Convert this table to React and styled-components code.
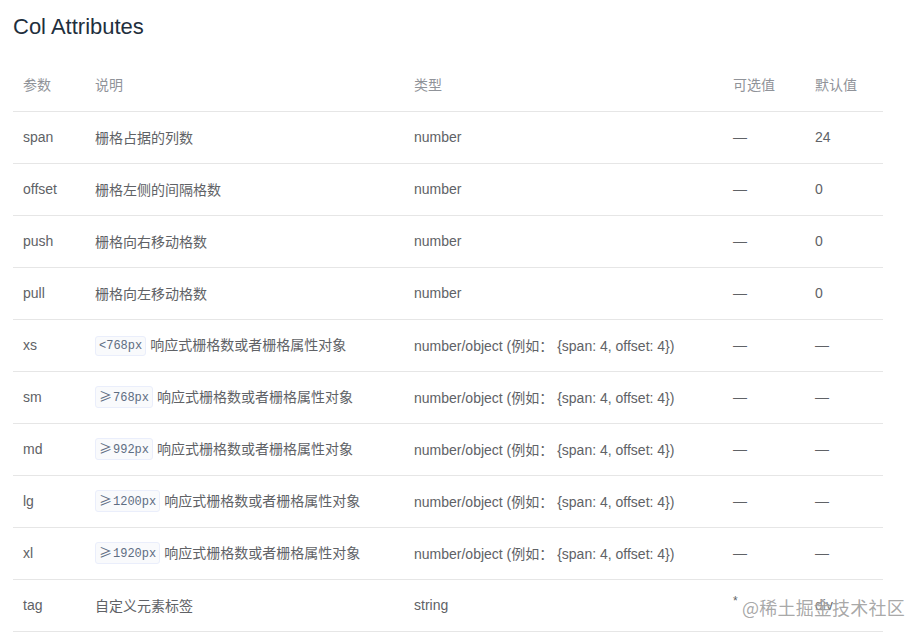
import React from "react";
import styled, { createGlobalStyle } from "styled-components";

const Global = createGlobalStyle`
  html, body { margin: 0; padding: 0; background: #fff; }
  body { font-family: "Liberation Sans", Arial, "Noto Sans CJK SC", sans-serif; }
`;

const Page = styled.div`
  position: relative;
  width: 920px;
  height: 640px;
  overflow: hidden;
  padding: 10px 37px 0 13px;
  box-sizing: border-box;
`;

const Title = styled.h3`
  margin: 0 0 17px;
  font-size: 22px;
  line-height: 33px;
  font-weight: 400;
  color: #1f2f3d;
`;

const Table = styled.table`
  width: 870px;
  border-collapse: collapse;
  table-layout: fixed;
  font-size: 14px;
  font-family: "Liberation Sans", Arial, "Noto Sans CJK SC", sans-serif;
`;

const Th = styled.th`
  height: 48px;
  padding: 0 10px 3px;
  text-align: left;
  font-weight: 400;
  color: #909399;
  border-bottom: 1px solid #e6e6e6;
  white-space: nowrap;
`;

const Td = styled.td`
  height: 49px;
  padding: 0 10px 2px;
  color: #606266;
  border-bottom: 1px solid #e6e6e6;
  white-space: nowrap;
`;

const Code = styled.code`
  display: inline-block;
  font-family: "Liberation Mono", "Courier New", monospace;
  font-size: 12px;
  line-height: 18px;
  padding: 0 3px;
  margin-right: 4px;
  background: #f9fafc;
  border: 1px solid #eaeefb;
  border-radius: 3px;
  color: #5e6d82;
  vertical-align: 1px;
`;

const Sym = styled.span`
  font-family: "Noto Sans CJK SC", sans-serif;
  font-size: 13px;
  margin-right: 1px;
`;

const Star = styled.span`
  position: relative;
  top: -5px;
  font-size: 12px;
`;

const Watermark = styled.div`
  position: absolute;
  left: 742px;
  top: 595px;
  font-size: 18px;
  line-height: 24px;
  color: rgba(130, 130, 130, 0.7);
  font-family: "Noto Sans CJK SC", sans-serif;
  letter-spacing: 0.2px;
  text-shadow: 0 0 2px #fff;
  pointer-events: none;
`;

const cols = [72, 319, 319, 82, 78];

const rows = [
  ["span", "栅格占据的列数", "number", "—", "24"],
  ["offset", "栅格左侧的间隔格数", "number", "—", "0"],
  ["push", "栅格向右移动格数", "number", "—", "0"],
  ["pull", "栅格向左移动格数", "number", "—", "0"],
  ["xs", ["<", "768px", "响应式栅格数或者栅格属性对象"], "number/object (例如： {span: 4, offset: 4})", "—", "—"],
  ["sm", ["≥", "768px", "响应式栅格数或者栅格属性对象"], "number/object (例如： {span: 4, offset: 4})", "—", "—"],
  ["md", ["≥", "992px", "响应式栅格数或者栅格属性对象"], "number/object (例如： {span: 4, offset: 4})", "—", "—"],
  ["lg", ["≥", "1200px", "响应式栅格数或者栅格属性对象"], "number/object (例如： {span: 4, offset: 4})", "—", "—"],
  ["xl", ["≥", "1920px", "响应式栅格数或者栅格属性对象"], "number/object (例如： {span: 4, offset: 4})", "—", "—"],
  ["tag", "自定义元素标签", "string", "*", "div"],
];

export default function App() {
  return (
    <Page>
      <Global />
      <Title>Col Attributes</Title>
      <Table>
        <colgroup>
          {cols.map((w, i) => (
            <col key={i} style={{ width: w }} />
          ))}
        </colgroup>
        <thead>
          <tr>
            <Th>参数</Th>
            <Th>说明</Th>
            <Th>类型</Th>
            <Th>可选值</Th>
            <Th>默认值</Th>
          </tr>
        </thead>
        <tbody>
          {rows.map((r) => (
            <tr key={r[0]}>
              <Td>{r[0]}</Td>
              <Td>
                {Array.isArray(r[1]) ? (
                  <>
                    <Code>
                      {r[1][0] === "<" ? r[1][0] : <Sym>{r[1][0]}</Sym>}
                      {r[1][1]}
                    </Code>
                    {r[1][2]}
                  </>
                ) : (
                  r[1]
                )}
              </Td>
              <Td>{r[2]}</Td>
              <Td>{r[3] === "*" ? <Star>*</Star> : r[3]}</Td>
              <Td>{r[4]}</Td>
            </tr>
          ))}
        </tbody>
      </Table>
      <Watermark>@稀土掘金技术社区</Watermark>
    </Page>
  );
}
